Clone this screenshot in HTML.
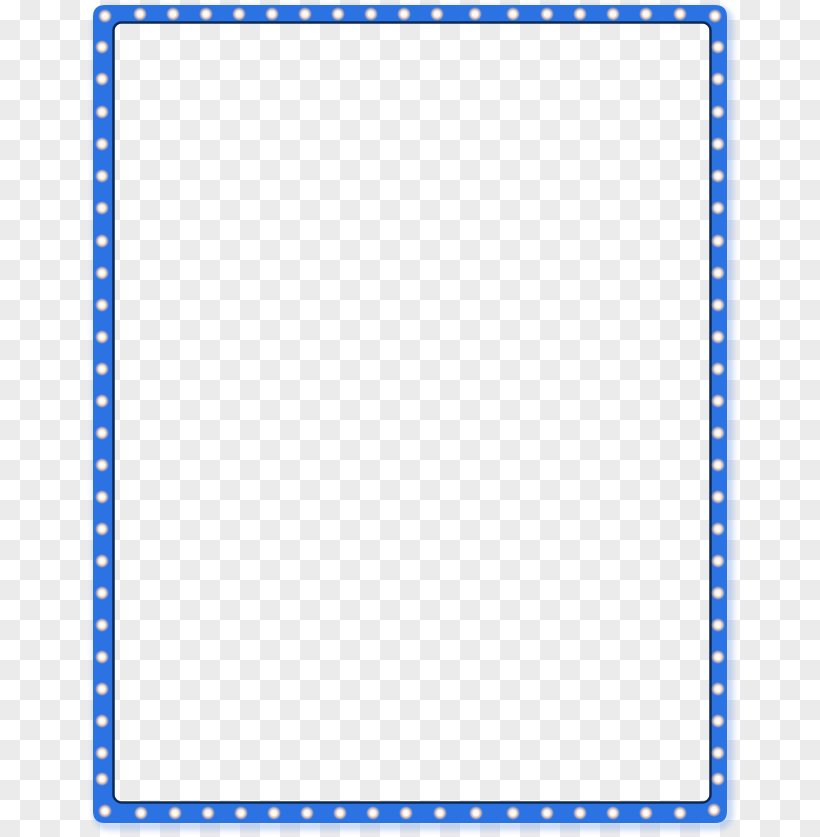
<!DOCTYPE html><html><head><style>
html,body{margin:0;padding:0}
body{width:820px;height:837px;overflow:hidden;background:repeating-conic-gradient(#ebebeb 0 25%,#ffffff 0 50%) 0 0/40px 40px;}
svg{position:absolute;left:0;top:0}
</style></head><body>
<svg width="820" height="837" viewBox="0 0 820 837">
<defs>
<radialGradient id="b"><stop offset="0" stop-color="#fff"/><stop offset="0.4" stop-color="#fff6ee"/><stop offset="0.7" stop-color="#f0c6a8" stop-opacity="0.8"/><stop offset="1" stop-color="#e8b89a" stop-opacity="0"/></radialGradient>
<filter id="s" x="-10%" y="-10%" width="120%" height="120%"><feGaussianBlur stdDeviation="3"/></filter>
</defs>
<rect x="97" y="10" width="632" height="816" rx="12" fill="none" stroke="#7fa6e8" stroke-width="8" opacity="0.45" filter="url(#s)"/>
<path fill-rule="evenodd" fill="#2b72e3" d="M105 5 H715 Q727 5 727 17 V811 Q727 823 715 823 H105 Q93 823 93 811 V17 Q93 5 105 5 Z M121 22 H702 Q711 22 711 31 V795 Q711 803 702 803 H121 Q113 803 113 795 V31 Q113 22 121 22 Z"/>
<rect x="113.5" y="22.5" width="597" height="780" rx="8" fill="none" stroke="#0d2a55" stroke-width="2.5"/>
<g fill="url(#b)">
<circle cx="105" cy="16" r="7"/><circle cx="140" cy="14" r="7"/><circle cx="173" cy="14" r="7"/><circle cx="206" cy="14" r="7"/><circle cx="239" cy="14" r="7"/><circle cx="272" cy="14" r="7"/><circle cx="305" cy="14" r="7"/><circle cx="338" cy="14" r="7"/><circle cx="371" cy="14" r="7"/><circle cx="404" cy="14" r="7"/><circle cx="437" cy="14" r="7"/><circle cx="475" cy="14" r="7"/><circle cx="513" cy="14" r="7"/><circle cx="547" cy="14" r="7"/><circle cx="580" cy="14" r="7"/><circle cx="613" cy="14" r="7"/><circle cx="646" cy="14" r="7"/><circle cx="680" cy="14" r="7"/><circle cx="715" cy="16" r="7"/>
<circle cx="102" cy="47" r="7"/><circle cx="102" cy="79" r="7"/><circle cx="102" cy="112" r="7"/><circle cx="102" cy="144" r="7"/><circle cx="102" cy="176" r="7"/><circle cx="102" cy="208" r="7"/><circle cx="102" cy="241" r="7"/><circle cx="102" cy="273" r="7"/><circle cx="102" cy="305" r="7"/><circle cx="102" cy="337" r="7"/><circle cx="102" cy="369" r="7"/><circle cx="102" cy="401" r="7"/><circle cx="102" cy="433" r="7"/><circle cx="102" cy="465" r="7"/><circle cx="102" cy="497" r="7"/><circle cx="102" cy="529" r="7"/><circle cx="102" cy="561" r="7"/><circle cx="102" cy="593" r="7"/><circle cx="102" cy="625" r="7"/><circle cx="102" cy="657" r="7"/><circle cx="102" cy="689" r="7"/><circle cx="102" cy="721" r="7"/><circle cx="102" cy="753" r="7"/><circle cx="102" cy="779" r="7"/>
<circle cx="718" cy="47" r="7"/><circle cx="718" cy="79" r="7"/><circle cx="718" cy="112" r="7"/><circle cx="718" cy="144" r="7"/><circle cx="718" cy="176" r="7"/><circle cx="718" cy="208" r="7"/><circle cx="718" cy="241" r="7"/><circle cx="718" cy="273" r="7"/><circle cx="718" cy="305" r="7"/><circle cx="718" cy="337" r="7"/><circle cx="718" cy="369" r="7"/><circle cx="718" cy="401" r="7"/><circle cx="718" cy="433" r="7"/><circle cx="718" cy="465" r="7"/><circle cx="718" cy="497" r="7"/><circle cx="718" cy="529" r="7"/><circle cx="718" cy="561" r="7"/><circle cx="718" cy="593" r="7"/><circle cx="718" cy="625" r="7"/><circle cx="718" cy="657" r="7"/><circle cx="718" cy="689" r="7"/><circle cx="718" cy="721" r="7"/><circle cx="718" cy="753" r="7"/><circle cx="718" cy="779" r="7"/>
<circle cx="105" cy="811" r="7"/><circle cx="141" cy="813" r="7"/><circle cx="175" cy="813" r="7"/><circle cx="208" cy="813" r="7"/><circle cx="241" cy="813" r="7"/><circle cx="274" cy="813" r="7"/><circle cx="307" cy="813" r="7"/><circle cx="340" cy="813" r="7"/><circle cx="373" cy="813" r="7"/><circle cx="406" cy="813" r="7"/><circle cx="440" cy="813" r="7"/><circle cx="476" cy="813" r="7"/><circle cx="513" cy="813" r="7"/><circle cx="547" cy="813" r="7"/><circle cx="580" cy="813" r="7"/><circle cx="613" cy="813" r="7"/><circle cx="646" cy="813" r="7"/><circle cx="680" cy="813" r="7"/><circle cx="714" cy="810" r="7"/>
</g>
</svg>
</body></html>
